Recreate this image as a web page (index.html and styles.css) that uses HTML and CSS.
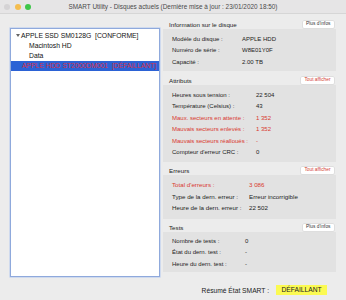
FILE: index.html
```html
<!DOCTYPE html>
<html lang="fr">
<head>
  <meta charset="UTF-8" />
  <meta name="viewport" content="width=device-width, initial-scale=1" />
  <title>SMART Utility</title>
  <link rel="stylesheet" href="styles.css">
</head>
<body>
  <div class="window">
    <div class="titlebar">
      <div class="lights">
        <span class="light close"></span>
        <span class="light min"></span>
        <span class="light zoom"></span>
      </div>
      <div class="title">SMART Utility - Disques actuels (Dernière mise à jour : 23/01/2020 18:50)</div>
    </div>

    <div class="content">
      <!-- Disk list -->
      <div class="sidebar">
        <div class="row disk"><span class="arrow"></span>APPLE SSD SM0128G&nbsp;&nbsp;[CONFORME]</div>
        <div class="row volume">Macintosh HD</div>
        <div class="row volume">Data</div>
        <div class="row disk selected">APPLE HDD ST2000DM001&nbsp;&nbsp;[DÉFAILLANT]</div>
      </div>

      <div class="panel">
        <div class="section-head">
          <span>Information sur le disque</span>
          <span class="btn">Plus d'infos</span>
        </div>
        <div class="box info">
          <div class="field"><span>Modèle du disque :</span><span>APPLE HDD</span></div>
          <div class="field"><span>Numéro de série :</span><span>W8E01Y0F</span></div>
          <div class="field"><span>Capacité :</span><span>2.00 TB</span></div>
        </div>

        <div class="section-head">
          <span>Attributs</span>
          <span class="btn red">Tout afficher</span>
        </div>
        <div class="box attrs">
          <div class="field"><span>Heures sous tension :</span><span>22 504</span></div>
          <div class="field"><span>Température (Celsius) :</span><span>43</span></div>
          <div class="field red"><span>Maux. secteurs en attente :</span><span>1 352</span></div>
          <div class="field red"><span>Mauvais secteurs enlevés :</span><span>1 352</span></div>
          <div class="field red"><span>Mauvais secteurs réalloués :</span><span>-</span></div>
          <div class="field"><span>Compteur d'erreur CRC :</span><span>0</span></div>
        </div>

        <div class="section-head">
          <span>Erreurs</span>
          <span class="btn red">Tout afficher</span>
        </div>
        <div class="box errors">
          <div class="field red"><span>Total d'erreurs :</span><span>3 086</span></div>
          <div class="field"><span>Type de la dern. erreur :</span><span>Erreur incorrigible</span></div>
          <div class="field"><span>Heure de la dern. erreur :</span><span>22 502</span></div>
        </div>

        <div class="section-head">
          <span>Tests</span>
          <span class="btn">Plus d'infos</span>
        </div>
        <div class="box tests">
          <div class="field"><span>Nombre de tests :</span><span>0</span></div>
          <div class="field"><span>État du dern. test :</span><span>-</span></div>
          <div class="field"><span>Heure du dern. test :</span><span>-</span></div>
        </div>

        <div class="summary">
          <span>Résumé État SMART :</span>
          <span class="status">DÉFAILLANT</span>
        </div>
      </div>
    </div>
  </div>
</body>
</html>
```

FILE: styles.css
```css
body {
  margin: 0;
  font-family: 'Liberation Sans', Arial, sans-serif;
  background: #ececec;
  color: #222;
}

.window {
  width: 346px;
  height: 300px;
  background: #ececec;
  overflow: hidden;
}

.titlebar {
  height: 13px;
  display: flex;
  align-items: center;
  background: #e6e5e6;
  border-bottom: 1px solid #d6d6d6;
  position: relative;
}

.lights {
  display: flex;
  gap: 4.5px;
  padding-left: 4px;
}

.light {
  width: 6px;
  height: 6px;
  border-radius: 50%;
}

.light.close { background: #d5d3d5; }
.light.min { background: #f4bd4f; }
.light.zoom { background: #3fc64a; }

.title {
  position: absolute;
  left: 0;
  right: 0;
  text-align: center;
  font-size: 6.4px;
  color: #4a4a4a;
}

.content {
  display: flex;
  align-items: flex-start;
  padding: 6px 0 0 10px;
}

.sidebar {
  margin-top: 8px;
  width: 148px;
  height: 245px;
  background: white;
  border: 1px solid #8fa9dc;
  box-shadow: 0 0 0 0.6px #bccdee;
  padding-top: 2px;
  box-sizing: content-box;
}

.row {
  height: 10px;
  line-height: 10px;
  font-size: 6.8px;
  color: #111;
  white-space: nowrap;
}

.row.disk {
  padding-left: 10px;
}

.row.volume {
  padding-left: 18px;
}

.arrow {
  display: inline-block;
  width: 0;
  height: 0;
  border-top: 3.5px solid #666;
  border-left: 2px solid transparent;
  border-right: 2px solid transparent;
  margin-left: -5.5px;
  margin-right: 1.5px;
  vertical-align: 1.5px;
}

.row.selected {
  background: #2b62d5;
  color: #d8304a;
  padding-left: 11px;
}

.panel {
  margin-left: 3px;
  width: 173px;
  display: flex;
  flex-direction: column;
}

.section-head {
  height: 9px;
  display: flex;
  align-items: center;
  justify-content: space-between;
  padding-left: 6px;
  font-size: 6.2px;
  color: #222;
}

.btn {
  background: white;
  font-size: 4.8px;
  height: 6.5px;
  line-height: 6.5px;
  padding: 0 3.5px;
  margin-right: 2px;
  border-radius: 1px;
  box-shadow: 0 0 0 0.5px #d0d0d0;
  color: #333;
}

.btn.red {
  color: #d23a32;
}

.box {
  background: #e2e2e2;
  padding: 4px 0 0 9px;
  box-sizing: border-box;
  margin-bottom: 5px;
}

.box.info { height: 42px; }
.box.attrs { height: 77px; margin-bottom: 4px; }
.box.errors { height: 44px; margin-bottom: 4px; }
.box.tests { height: 40px; padding-top: 3px; }

.field {
  display: grid;
  height: 11.5px;
  align-items: center;
  font-size: 6px;
  color: #222;
}

.info .field { grid-template-columns: 70px 1fr; }
.attrs .field { grid-template-columns: 84px 1fr; }
.errors .field { grid-template-columns: 77px 1fr; font-size: 6.2px; }
.tests .field { grid-template-columns: 73px 1fr; }

.field.red {
  color: #d9382e;
}

.summary {
  display: flex;
  align-items: center;
  justify-content: flex-end;
  margin-top: 8px;
  padding-right: 9px;
  font-size: 6.7px;
  color: #222;
}

.status {
  margin-left: 7px;
  width: 51px;
  height: 10px;
  line-height: 10px;
  text-align: center;
  background: #fbfa52;
  color: #222;
}
```
